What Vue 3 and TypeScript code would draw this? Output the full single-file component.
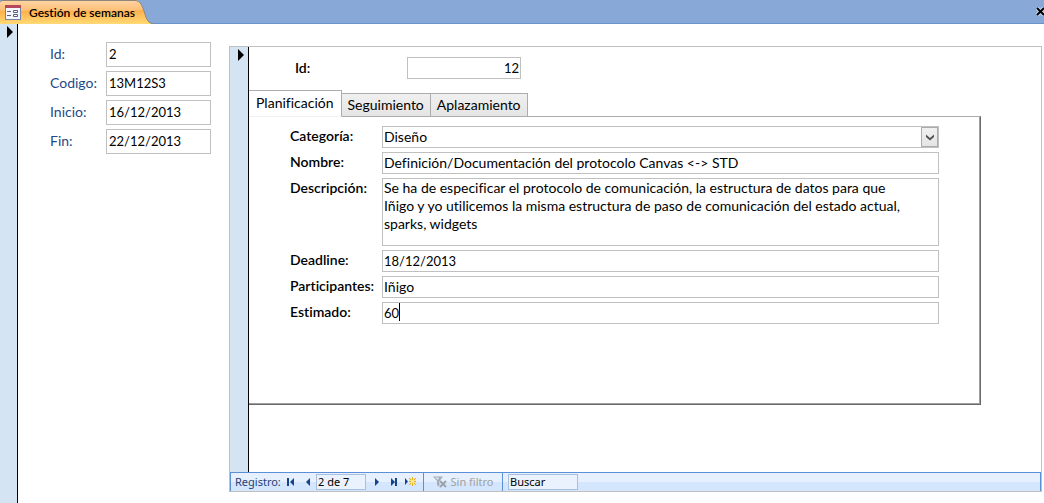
<script setup lang="ts">
import { ref } from 'vue'

interface Field {
  id: string
  label: string
  value: string
  kind: 'select' | 'text' | 'area'
  numeric?: boolean
  caret?: boolean
}

const week = ref([
  { id: 'week-id', label: 'Id:', value: '2' },
  { id: 'week-code', label: 'Codigo:', value: '13M12S3' },
  { id: 'week-start', label: 'Inicio:', value: '16/12/2013' },
  { id: 'week-end', label: 'Fin:', value: '22/12/2013' },
])

const fields = ref<Field[]>([
  { id: 'category', label: 'Categoría:', value: 'Diseño', kind: 'select' },
  { id: 'name', label: 'Nombre:', value: 'Definición/Documentación del protocolo Canvas <-> STD', kind: 'text' },
  {
    id: 'description',
    label: 'Descripción:',
    value:
      'Se ha de especificar el protocolo de comunicación, la estructura de datos para que Iñigo y yo utilicemos la misma estructura de paso de comunicación del estado actual, sparks, widgets',
    kind: 'area',
  },
  { id: 'deadline', label: 'Deadline:', value: '18/12/2013', kind: 'text', numeric: true },
  { id: 'people', label: 'Participantes:', value: 'Iñigo', kind: 'text' },
  { id: 'estimate', label: 'Estimado:', value: '60', kind: 'text', numeric: true, caret: true },
])

const tabs = ['Planificación', 'Seguimiento', 'Aplazamiento']
const activeTab = ref(0)
const taskId = ref('12')
const position = ref('2 de 7')
const search = ref('Buscar')
</script>

<template>
  <div class="window">
    <header class="titlebar">
      <div class="doc-tab">
        <svg class="form-icon" width="16" height="15" viewBox="0 0 16 15" aria-hidden="true">
          <rect x="0.5" y="0.5" width="15" height="14" fill="#f4f6fb" stroke="#7385ad" />
          <rect x="0" y="0" width="16" height="3" fill="#b5485c" />
          <path d="M2 6.5h4M2 10.5h4" stroke="#56617f" />
          <path d="M8.500 5.500h4v2h-4zM8.500 9.500h4v2h-4z" fill="#fff" stroke="#56617f" />
        </svg>
        <h1>Gestión de semanas</h1>
      </div>
      <svg class="tab-end" width="18" height="24" viewBox="0 0 18 24" aria-hidden="true">
        <defs>
          <linearGradient id="tab-fill" x1="0" y1="0" x2="0" y2="1">
            <stop offset="0" stop-color="#ffd3a2" />
            <stop offset="0.4" stop-color="#ffc078" />
            <stop offset="0.45" stop-color="#ffb04d" />
            <stop offset="1" stop-color="#ffda74" />
          </linearGradient>
        </defs>
        <path d="M0 0C6 1 7 6 9 11C11 17 12 23 18 24H0Z" fill="url(#tab-fill)" />
        <path d="M0 0.500C6 1 7 6 9 11C11 17 12 23 18 23.500" fill="none" stroke="#8c8578" />
      </svg>
      <button class="close" type="button" aria-label="Cerrar">
        <svg width="8" height="9" viewBox="0 0 8 9" aria-hidden="true">
          <path d="M1 1l7 7M8 1L1 8" stroke="#c9daf1" stroke-width="4" />
          <path d="M1 1l7 7M8 1L1 8" stroke="#000" stroke-width="2" />
        </svg>
      </button>
    </header>

    <main class="body">
      <div class="selector">
        <svg width="6" height="12" viewBox="0 0 6 12" aria-hidden="true"><path d="M0 0L6 6L0 12Z" /></svg>
      </div>

      <form class="week" @submit.prevent>
        <template v-for="f in week" :key="f.id">
          <label :for="f.id">{{ f.label }}</label>
          <input :id="f.id" v-model="f.value" class="numeric" type="text" />
        </template>
      </form>

      <section class="subform">
        <div class="record">
          <div class="selector inner">
            <svg width="6" height="12" viewBox="0 0 6 12" aria-hidden="true"><path d="M0 0L6 6L0 12Z" /></svg>
          </div>
          <div class="detail">
            <div class="task-id">
              <label for="task-id">Id:</label>
              <input id="task-id" v-model="taskId" class="numeric" type="text" />
            </div>
            <div class="tabs" role="tablist">
              <button
                v-for="(t, i) in tabs"
                :key="t"
                type="button"
                role="tab"
                :aria-selected="i === activeTab"
                :class="{ active: i === activeTab }"
                @click="activeTab = i"
              >
                {{ t }}
              </button>
            </div>
            <div class="panel" role="tabpanel">
              <template v-for="f in fields" :key="f.id">
                <label :for="f.id">{{ f.label }}</label>
                <div class="control">
                  <template v-if="f.kind === 'select'">
                    <select :id="f.id" v-model="f.value">
                      <option>Diseño</option>
                    </select>
                    <span class="arrow">
                      <svg width="8" height="7" viewBox="0 0 8 7" aria-hidden="true">
                        <path d="M0 0.500L4 4L8 0.500V3L4 6.500L0 3Z" fill="#505050" />
                      </svg>
                    </span>
                  </template>
                  <textarea v-else-if="f.kind === 'area'" :id="f.id" v-model="f.value"></textarea>
                  <input v-else :id="f.id" v-model="f.value" :class="{ numeric: f.numeric }" type="text" />
                  <span v-if="f.caret" class="caret"></span>
                </div>
              </template>
            </div>
          </div>
        </div>

        <nav class="navigator" aria-label="Registro">
          <label for="position">Registro:</label>
          <button type="button" aria-label="Primer registro">
            <svg width="8" height="8" viewBox="0 0 8 8"><path d="M0 0h2v8H0zM7 0v8L3 4z" /></svg>
          </button>
          <button type="button" aria-label="Registro anterior">
            <svg width="8" height="8" viewBox="0 0 8 8"><path d="M6 0v8L2 4z" /></svg>
          </button>
          <input id="position" v-model="position" class="position" type="text" />
          <button class="next" type="button" aria-label="Registro siguiente">
            <svg width="8" height="8" viewBox="0 0 8 8"><path d="M2 0v8l4-4z" /></svg>
          </button>
          <button type="button" aria-label="Último registro">
            <svg width="8" height="8" viewBox="0 0 8 8"><path d="M1 0v8l4-4zM5 0h2v8H5z" /></svg>
          </button>
          <button class="new" type="button" aria-label="Nuevo registro">
            <svg width="11" height="10" viewBox="0 0 11 10">
              <path d="M0 1v7l3-3.500z" />
              <path d="M4 1h7v7H4z" fill="#f8e68c" />
              <path d="M4 1h1v1H4zM7 0h1v3H7zM10 1h1v1h-1zM4 4h2v1H4zM9 4h2v1H9zM5 2h1v1H5zM9 2h1v1H9zM7 6h1v3H7zM5 6h1v1H5zM9 6h1v1H9zM4 7h1v1H4zM10 7h1v1h-1z" fill="#e2b030" />
            </svg>
          </button>
          <button class="filter" type="button" disabled>
            <svg width="14" height="12" viewBox="0 0 14 12" aria-hidden="true">
              <path d="M0 0.500h10L6.500 5v6L4 9V5z" fill="#a3abb8" />
              <path d="M2 1.500h4L5 4z" fill="#e3e9f2" />
              <path d="M7 5l6 6M13 5l-6 6" fill="none" stroke="#dfeafa" stroke-width="3" />
              <path d="M7 5l6 6M13 5l-6 6" fill="none" stroke="#9ba1ab" stroke-width="2" />
            </svg>
            Sin filtro
          </button>
          <input v-model="search" class="search" type="text" aria-label="Buscar" />
        </nav>
      </section>
    </main>
  </div>
</template>

<style>
body {
  margin: 0;
  background: #fff;
}
</style>

<style scoped>
* {
  box-sizing: border-box;
}
.window {
  display: flex;
  flex-direction: column;
  min-height: 100vh;
  font: 14px/18px Lato, Carlito, Calibri, sans-serif;
  font-variant-ligatures: no-common-ligatures;
  color: #000;
}
input,
select,
textarea,
button {
  font: inherit;
  font-variant-ligatures: inherit;
  color: inherit;
  margin: 0;
  border-radius: 0;
  outline: none;
}
button {
  border: 0;
  padding: 0;
  background: none;
}
.numeric {
  font-size: 13px;
}
.titlebar {
  display: flex;
  height: 24px;
  background: #88a9d7;
  border-bottom: 1px solid #6a93cd;
}
.doc-tab {
  display: flex;
  align-items: center;
  gap: 8px;
  height: 24px;
  padding: 0 0 0 5px;
  border-top: 1px solid #8c8578;
  border-top-left-radius: 3px;
  background: linear-gradient(#ffd3a2, #ffc078 40%, #ffb04d 45%, #ffda74);
}
h1 {
  margin: 0;
  font-size: 12px;
  font-weight: 600;
  white-space: nowrap;
}
.tab-end {
  flex: none;
}
.close {
  display: flex;
  align-items: center;
  margin-left: auto;
}
.body {
  flex: 1;
  display: flex;
}
.selector {
  flex: none;
  width: 18px;
  padding: 2px 0 0 7px;
  background: #d5e4f2;
  border-right: 1px solid #000;
}
.selector svg {
  display: block;
}
.inner {
  width: 19px;
  padding-left: 8px;
}
.week {
  flex: none;
  display: grid;
  grid-template-columns: 56px 105px;
  grid-auto-rows: 25px;
  gap: 4px 0;
  align-content: start;
  padding: 18px 18px 0 32px;
}
.week label {
  padding-top: 3px;
  color: #1f4987;
}
.week input {
  width: 100%;
  padding: 0 2px 2px;
  border: 1px solid #c0c0c0;
}
.subform {
  flex: 1;
  min-width: 0;
  display: flex;
  flex-direction: column;
  margin: 22px 2px 11px 0;
  border: 1px solid #c0c0c0;
}
.record {
  flex: 1;
  display: flex;
}
.detail {
  flex: 1;
  min-width: 0;
  padding: 10px 60px 60px 0;
}
.task-id {
  display: flex;
  align-items: center;
  height: 22px;
  padding-left: 46px;
}
.task-id label {
  width: 112px;
  font-weight: 600;
}
.task-id input {
  width: 114px;
  height: 22px;
  padding: 0 1px;
  border: 1px solid #c0c0c0;
  text-align: right;
}
.tabs {
  display: flex;
  align-items: flex-end;
  height: 38px;
  margin-bottom: -1px;
}
.tabs button {
  position: relative;
  height: 24px;
  padding: 0 6px;
  border: 1px solid #acacac;
  border-left-width: 0;
  background: linear-gradient(#f0f0f0, #e5e5e5);
}
.tabs .active {
  height: 27px;
  padding: 0 7px 2px;
  border-bottom-color: #f0f0f0;
  background: #fff;
}
.panel {
  display: grid;
  grid-template-columns: 92px 1fr;
  gap: 4px 0;
  padding: 9px 41px 80px;
  border: solid #696969;
  border-width: 1px 1px 1px 0;
  border-top-color: #acacac;
  box-shadow: inset -1px -1px #a0a0a0;
}
.panel label {
  padding-top: 1px;
  font-weight: 600;
}
.control {
  position: relative;
  display: flex;
}
.control input,
.control select,
.control textarea {
  width: 100%;
  height: 22px;
  padding: 0 1px 1px;
  border: 1px solid #c0c0c0;
  background: #fff;
}
.control select {
  appearance: none;
}
.control textarea {
  height: 68px;
  padding-right: 20px;
  resize: none;
  overflow: hidden;
}
.arrow {
  position: absolute;
  top: 1px;
  right: 1px;
  bottom: 1px;
  width: 17px;
  display: flex;
  align-items: center;
  justify-content: center;
  border: 1px solid #acacac;
  background: linear-gradient(#f0f0f0, #e5e5e5);
  pointer-events: none;
}
.caret {
  position: absolute;
  top: 1px;
  left: 17px;
  width: 1px;
  height: 18px;
  background: #000;
}
.navigator {
  display: flex;
  align-items: center;
  height: 19px;
  padding-left: 4px;
  border: solid #5b8fd6;
  border-width: 1px 1px 0;
  background: linear-gradient(#e6f0fe 50%, #d3e6fe 50%);
  font: 11px/16px "Noto Sans", "Open Sans", sans-serif;
}
.navigator label {
  width: 47px;
  color: #1f3f78;
  white-space: nowrap;
}
.navigator button {
  display: flex;
  align-items: center;
  justify-content: center;
  width: 17px;
}
.navigator svg {
  fill: #15428b;
}
.navigator .position,
.navigator .search {
  height: 16px;
  padding: 0 1px;
  border: 1px solid #a9bfdf;
  background: #eaf2fd;
}
.navigator .position {
  width: 50px;
}
.navigator .next {
  margin-left: 2px;
}
.navigator .filter {
  gap: 4px;
  width: 80px;
  height: 18px;
  margin-left: 4px;
  border: solid #5b8fd6;
  border-width: 0 1px;
  color: #a09f9c;
}
.navigator .search {
  width: 70px;
  margin-left: 5px;
}
</style>
